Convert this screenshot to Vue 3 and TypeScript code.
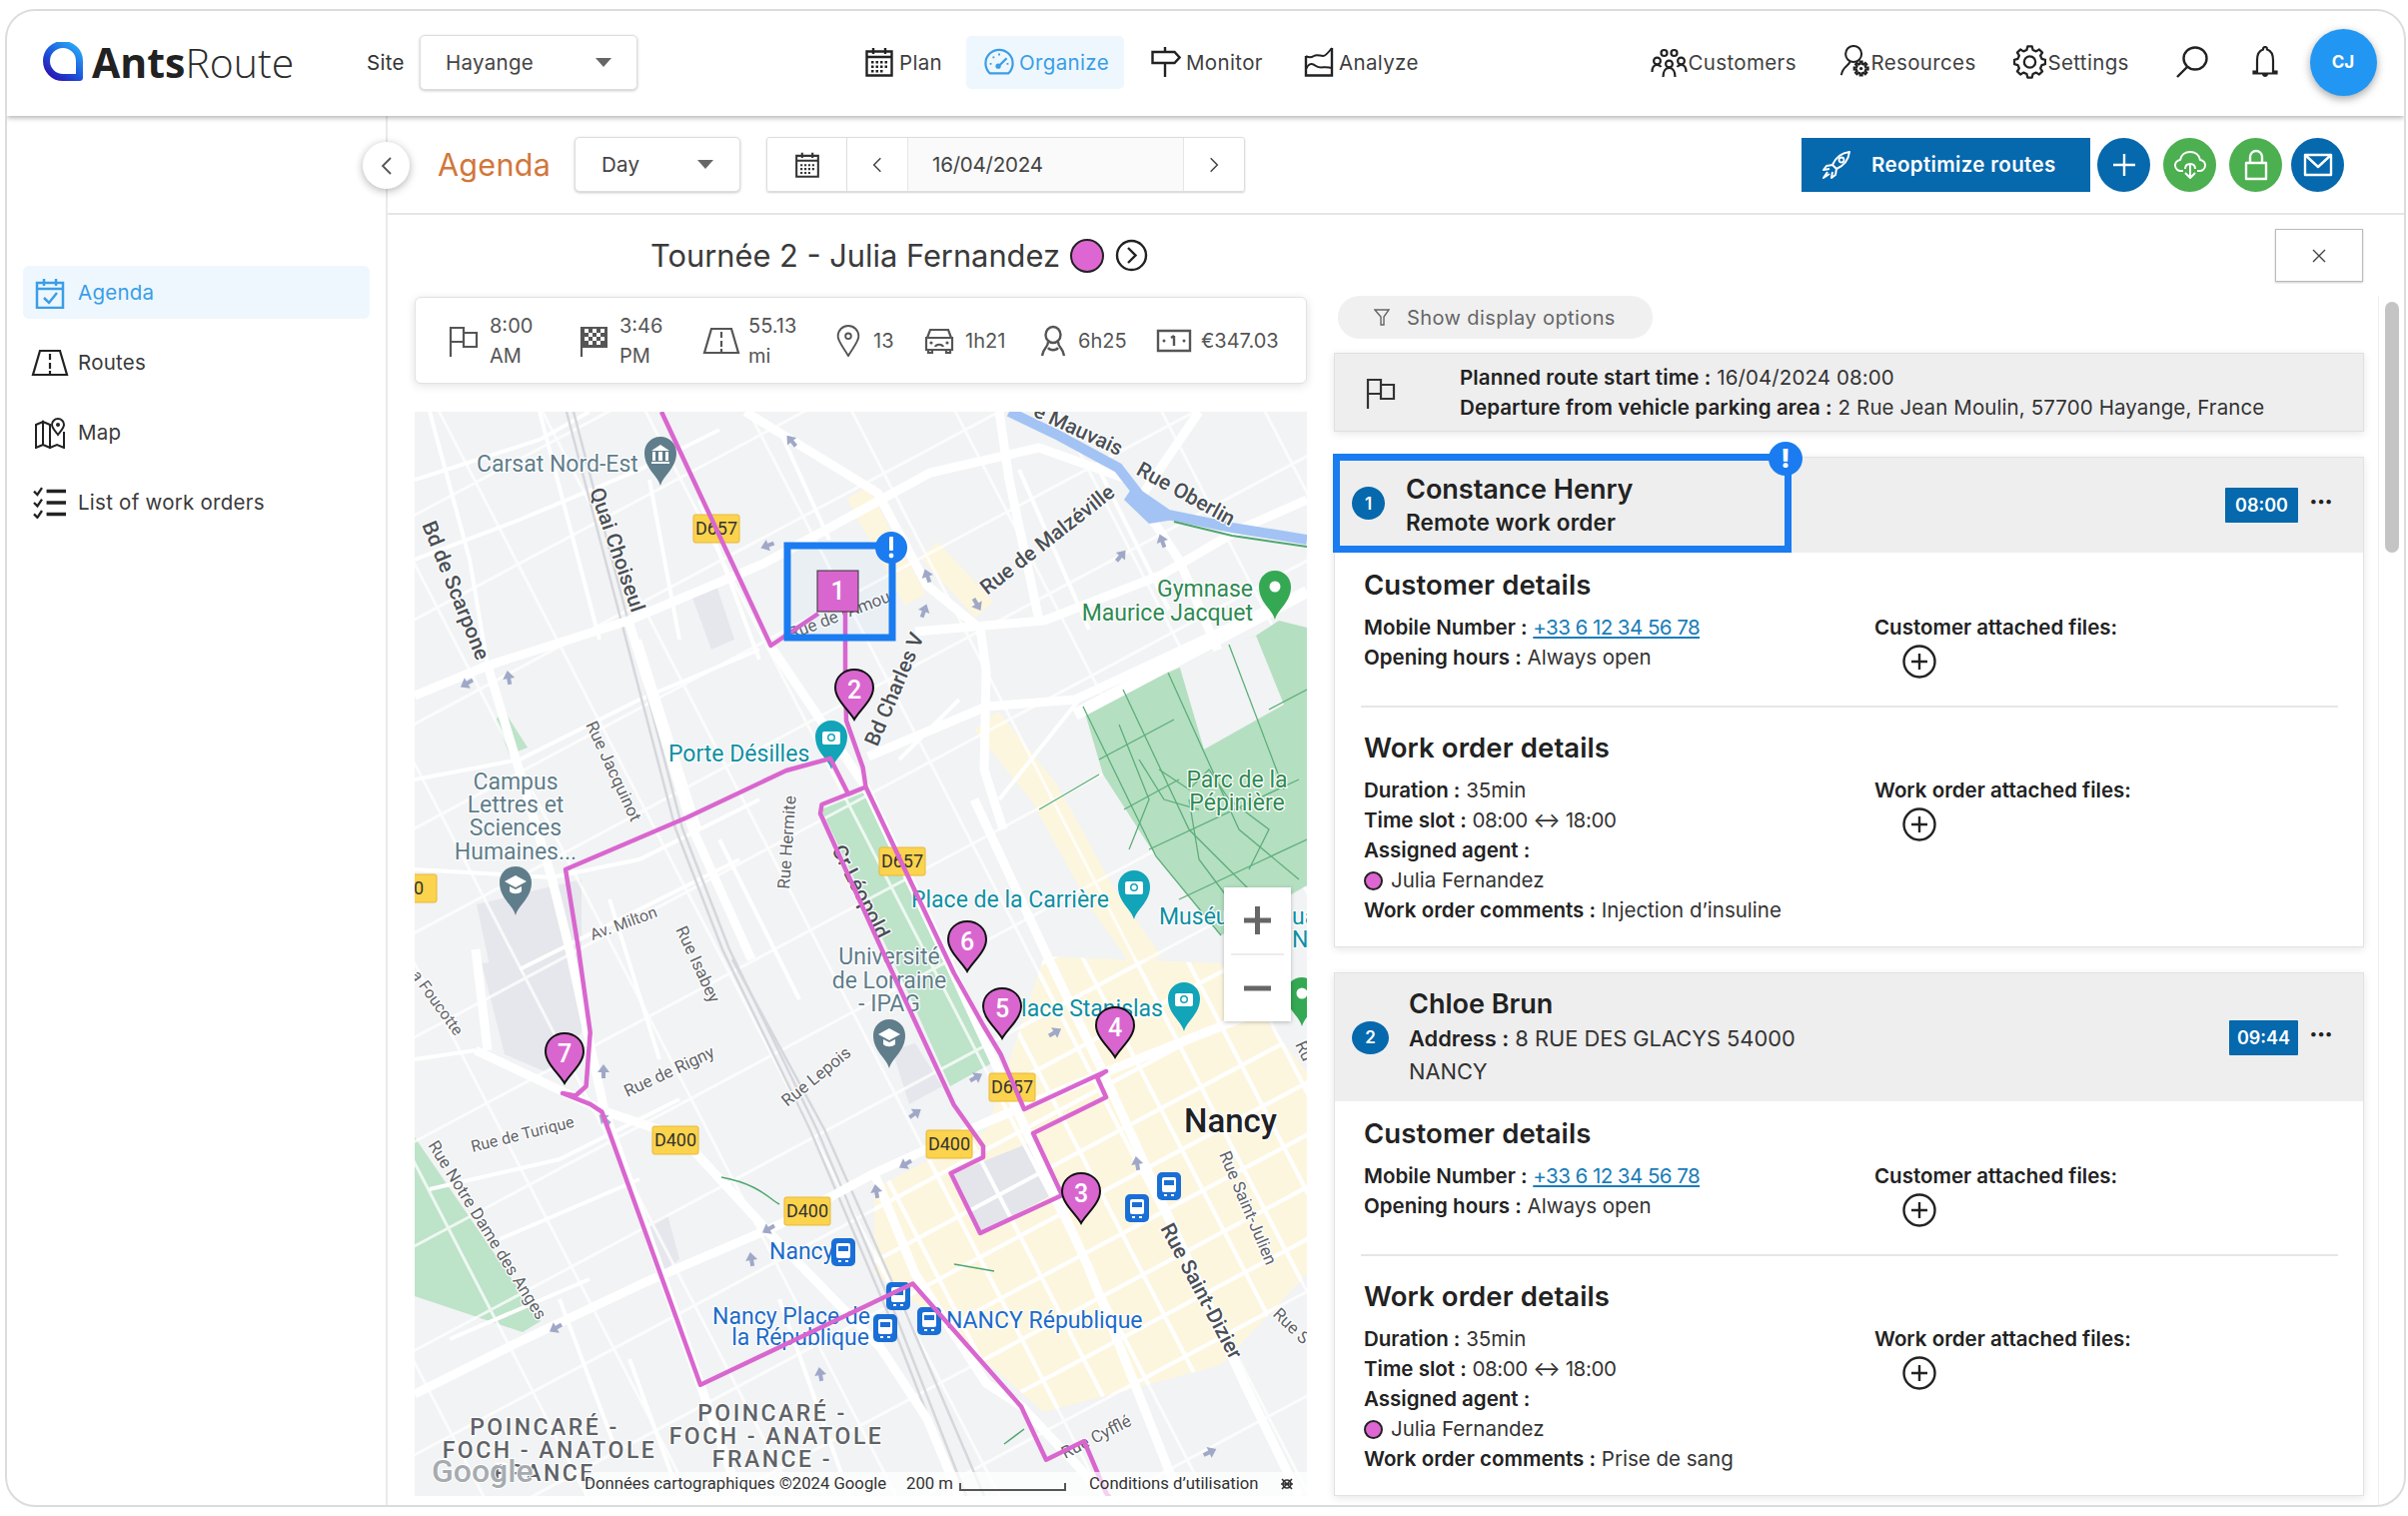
<script setup lang="ts">
interface Label { t: string; x: number; y: number; c: string; r?: number; a?: string }
interface Pin { n: number; x: number; y: number }
interface Poi { x: number; y: number; fill: string; kind: string }

const navCenter = [
  { label: 'Plan', icon: 'i-calendar', width: 102 },
  { label: 'Organize', icon: 'i-gauge', width: 185, active: true },
  { label: 'Monitor', icon: 'i-sign', width: 153 },
  { label: 'Analyze', icon: 'i-chart', width: 346.5 },
]
const navRight = [
  { label: 'Customers', icon: 'i-people', width: 189, iw: 38, gap: 0 },
  { label: 'Resources', icon: 'i-agent', width: 174, iw: 32, gap: 0 },
  { label: 'Settings', icon: 'i-gear', width: 162, iw: 33, gap: 2 },
]
const sideItems = [
  { label: 'Agenda', icon: 'i-agenda', active: true },
  { label: 'Routes', icon: 'i-road' },
  { label: 'Map', icon: 'i-map' },
  { label: 'List of work orders', icon: 'i-list' },
]
const stats = [
  { icon: 'i-flag', text: '8:00 AM', w: 131, tw: 50, iw: 30, gap: 11 },
  { icon: 'i-finish', text: '3:46 PM', w: 123, tw: 50, iw: 30, gap: 10 },
  { icon: 'i-road', text: '55.13 mi', w: 133, tw: 52, iw: 38, gap: 8 },
  { icon: 'i-pin', text: '13', w: 88, tw: 30, iw: 26, gap: 12 },
  { icon: 'i-car', text: '1h21', w: 116, tw: 50, iw: 32, gap: 10 },
  { icon: 'i-person', text: '6h25', w: 117, tw: 52, iw: 28, gap: 11 },
  { icon: 'i-money', text: '€347.03', w: 122, tw: 80, iw: 36, gap: 9 },
]
const stops = [
  { n: 1, name: 'Constance Henry', time: '08:00', comment: 'Injection d’insuline', remote: true },
  { n: 2, name: 'Chloe Brun', time: '09:44', comment: 'Prise de sang', remote: false },
]

// street network: two families of parallel lines, same slope as the real blocks
function grid(step: number, ox: number, oy: number): string {
  const a = [0.46, 0.89]
  const b = [0.88, -0.47]
  let d = ''
  for (let k = -16; k <= 16; k++) {
    const px = ox + b[0] * k * step
    const py = oy + b[1] * k * step
    d += `M${px - a[0] * 1500} ${py - a[1] * 1500}L${px + a[0] * 1500} ${py + a[1] * 1500}`
    const qx = ox + a[0] * k * step
    const qy = oy + a[1] * k * step
    d += `M${qx - b[0] * 1500} ${qy - b[1] * 1500}L${qx + b[0] * 1500} ${qy + b[1] * 1500}`
  }
  return d
}
const coarseStreets = grid(92, 1100, 1090)
const fineStreets = grid(46, 1100, 1090)

function gear(cx: number, cy: number, r1: number, r2: number, teeth: number): string {
  let d = ''
  const step = (Math.PI * 2) / teeth
  for (let i = 0; i < teeth; i++) {
    const t = i * step
    const pts: [number, number][] = [
      [r1, t - step * 0.32], [r2, t - step * 0.18], [r2, t + step * 0.18], [r1, t + step * 0.32],
    ]
    for (const [r, an] of pts) {
      d += `${d ? 'L' : 'M'}${(cx + r * Math.cos(an)).toFixed(2)} ${(cy + r * Math.sin(an)).toFixed(2)}`
    }
  }
  return d + 'Z'
}
const gearPath = gear(16, 16, 12, 15.2, 8)
const smallGear = gear(23, 25, 5, 7.5, 8)

const thickRoads = [
  '415,1395 517,1344 646,1283 781,1225 875,1174 987,1123 1116,1069 1308,993',
  '415,696 488,666 629,621 764,564 869,507 931,473 1040,448 1130,480',
  '916,632 1045,621 1163,575 1240,530 1308,500',
  '869,757 987,707 1076,700 1308,592',
  '746,412 878,493 928,586 981,629 987,671 985,770 1004,830',
  '771,646 866,787 954,973 1045,1170 1090,1270 1180,1497',
  '476,1051 605,1112 682,1138 775,1239 881,1348 928,1420 960,1497',
  '975,800 1045,950 1104,1073 1245,1384 1300,1497',
  '476,950 488,1051',
  '488,666 552,878 570,950 605,1112 701,1386 740,1497',
  '875,1174 916,1275 987,1384 1022,1407 1107,1497',
  '629,621 693,829 752,960',
  '1200,412 1140,500 1180,560 1240,700',
  '1000,412 1010,480 1040,621',
]
const thinRoads = [
  '415,480 540,440 590,412', '415,560 520,520 640,470 720,430', '430,412 470,560 488,666',
  '540,412 600,640', '700,500 760,660', '650,480 680,640', '780,430 830,540', '415,780 520,760 640,700 760,650',
  '415,870 552,878 640,860 760,800', '640,640 700,829', '720,840 800,1000', '610,900 660,1060', '520,970 620,920 740,860',
  '1100,470 1170,610', '1020,470 1090,630', '900,760 960,700', '1000,800 1080,700', '415,1060 476,1051',
  '430,1190 560,1160 680,1100', '500,1240 640,1180', '450,1340 590,1280', '560,1300 620,1460', '630,1360 680,1497',
  '780,1300 850,1497', '1150,760 1220,900',
]
const rails = ['567,412 676,829 723,950 811,1131 887,1310 960,1497', '574,412 683,829 730,950 818,1131 894,1310 967,1497', '733,960 825,1130 905,1310 985,1497']
const parkLines = [
  '1084,707 1157,857 1222,936', '1124,690 1190,830 1260,900', '1169,673 1240,830 1300,880', '1230,645 1285,790',
  '1100,760 1175,720', '1125,810 1180,780', '1150,850 1300,780', '1180,900 1308,840', '1120,725 1150,800 1130,850',
  '1160,770 1190,790 1210,770 1230,800', '1190,800 1200,860 1230,900', '1040,810 1100,775',
  '1230,800 1270,830 1250,870', '1140,760 1165,800 1200,810', '1270,710 1308,690',
]
const water = '1010,412 1060,436 1119,468 1140,495 1169,515 1233,528 1308,540'
const route = [
  '662,412 771.5,646 819,614',
  '846,611 846,671 847,721 863.6,768 866.5,787.5 822.5,805 821,814 887,960 954.6,1105.5 984,1147 984,1158 951.6,1174 981,1234 1063,1196 1034,1134 1107,1098 1098,1078 1107,1072 1025,1110 1001.5,1055 984,1026 954.6,973.5 866.5,787.5 849,794.6 831,759 787,771 687.6,818 566,870 579,950 590.7,1033 586.6,1087 576,1096.5 563,1094 590.7,1104.8 602.5,1112.7 701,1385.8 913.5,1284.5 1022,1407.5 1047,1460.7 1085,1442 1107,1494 1112,1500',
]
const arrows = [
  { x: 792, y: 441, r: -40 }, { x: 768, y: 546, r: -110 }, { x: 467, y: 684, r: -120 }, { x: 509, y: 678, r: -10 },
  { x: 928, y: 576, r: -20 }, { x: 978, y: 605, r: 150 }, { x: 925, y: 611, r: 20 }, { x: 1122, y: 556, r: 40 },
  { x: 1163, y: 541, r: -20 }, { x: 1056, y: 1033, r: 60 }, { x: 977, y: 1078, r: 60 }, { x: 916, y: 1114, r: 55 },
  { x: 906, y: 1165, r: -120 }, { x: 877, y: 1192, r: -10 }, { x: 769, y: 1230, r: -120 }, { x: 752, y: 1260, r: -10 },
  { x: 605, y: 1120, r: -50 }, { x: 604, y: 1072, r: 0 }, { x: 1138, y: 1164, r: -10 }, { x: 556, y: 1329, r: -120 },
  { x: 821, y: 1375, r: -10 }, { x: 1211, y: 1453, r: 65 },
]
const labels: Label[] = [
  { t: 'Carsat Nord-Est', x: 477, y: 472, c: 'gray' },
  { t: 'Quai Choiseul', x: 590, y: 491, c: 'md', r: 71 },
  { t: 'Bd de Scarpone', x: 422, y: 525, c: 'md', r: 68 },
  { t: 'Rue de Malzéville', x: 988, y: 596, c: 'md', r: -38 },
  { t: 'Rue Oberlin', x: 1136, y: 474, c: 'md', r: 29 },
  { t: 'e Mauvais', x: 1033, y: 416, c: 'md', r: 25 },
  { t: 'Gymnase', x: 1254, y: 597, c: 'green', a: 'end' },
  { t: 'Maurice Jacquet', x: 1254, y: 621, c: 'green', a: 'end' },
  { t: 'Rue de l’Amour', x: 792, y: 640, c: 'sm', r: -21 },
  { t: 'Bd Charles V', x: 878, y: 748, c: 'md', r: -67 },
  { t: 'Porte Désilles', x: 669, y: 762, c: 'teal' },
  { t: 'Campus', x: 516, y: 790, c: 'gray', a: 'middle' },
  { t: 'Lettres et', x: 516, y: 813, c: 'gray', a: 'middle' },
  { t: 'Sciences', x: 516, y: 836, c: 'gray', a: 'middle' },
  { t: 'Humaines...', x: 516, y: 860, c: 'gray', a: 'middle' },
  { t: 'Rue Jacquinot', x: 586, y: 725, c: 'sm', r: 65 },
  { t: 'Rue Hermite', x: 790, y: 890, c: 'sm', r: -86 },
  { t: 'Cr Léopold', x: 832, y: 850, c: 'md', r: 63 },
  { t: 'Parc de la', x: 1238, y: 788, c: 'green', a: 'middle' },
  { t: 'Pépinière', x: 1238, y: 811, c: 'green', a: 'middle' },
  { t: 'Place de la Carrière', x: 912, y: 908, c: 'teal' },
  { t: 'Muséu', x: 1160, y: 925, c: 'teal' },
  { t: 'ua', x: 1293, y: 925, c: 'teal' },
  { t: 'N', x: 1293, y: 948, c: 'teal' },
  { t: 'Av. Milton', x: 593, y: 941, c: 'xs', r: -20 },
  { t: 'Rue Isabey', x: 676, y: 930, c: 'sm', r: 65 },
  { t: 'Université', x: 890, y: 965, c: 'gray', a: 'middle' },
  { t: 'de Lorraine', x: 890, y: 989, c: 'gray', a: 'middle' },
  { t: '- IPAG', x: 890, y: 1012, c: 'gray', a: 'middle' },
  { t: 'Place Stanislas', x: 1164, y: 1017, c: 'teal', a: 'end' },
  { t: 'a Foucotte', x: 411, y: 976, c: 'xs', r: 54 },
  { t: 'Rue de Rigny', x: 628, y: 1098, c: 'sm', r: -25 },
  { t: 'Rue Lepois', x: 788, y: 1108, c: 'sm', r: -39 },
  { t: 'Rue de Turique', x: 473, y: 1153, c: 'xs', r: -14 },
  { t: 'Rue Notre Dame des Anges', x: 428, y: 1146, c: 'sm', r: 58 },
  { t: 'Nancy', x: 1185, y: 1133, c: 'city' },
  { t: 'Rue Saint-Julien', x: 1220, y: 1155, c: 'sm', r: 67 },
  { t: 'Rue Saint-Dizier', x: 1161, y: 1229, c: 'md', r: 62 },
  { t: 'Rue S', x: 1273, y: 1316, c: 'sm', r: 44 },
  { t: 'Ru', x: 1296, y: 1045, c: 'sm', r: 65 },
  { t: 'Rue Cyfflé', x: 1066, y: 1460, c: 'sm', r: -27 },
  { t: 'Nancy', x: 770, y: 1260, c: 'blue' },
  { t: 'Nancy Place de', x: 871, y: 1325, c: 'blue', a: 'end' },
  { t: 'la République', x: 870, y: 1346, c: 'blue', a: 'end' },
  { t: 'NANCY République', x: 947, y: 1329, c: 'blue' },
  { t: 'POINCARÉ -', x: 545, y: 1436, c: 'zone', a: 'middle' },
  { t: 'FOCH - ANATOLE', x: 550, y: 1459, c: 'zone', a: 'middle' },
  { t: 'FRANCE', x: 545, y: 1482, c: 'zone', a: 'middle' },
  { t: 'POINCARÉ -', x: 773, y: 1422, c: 'zone', a: 'middle' },
  { t: 'FOCH - ANATOLE', x: 777, y: 1445, c: 'zone', a: 'middle' },
  { t: 'FRANCE -', x: 773, y: 1468, c: 'zone', a: 'middle' },
]
const shields = [
  { t: 'D657', x: 717, y: 529 }, { t: 'D657', x: 903, y: 862 }, { t: 'D657', x: 1013, y: 1088 },
  { t: 'D400', x: 676, y: 1141 }, { t: 'D400', x: 950, y: 1145 }, { t: 'D400', x: 808, y: 1212 }, { t: '00', x: 414, y: 889 },
]
const pois: Poi[] = [
  { x: 661, y: 461, fill: '#607d8b', kind: 'museum' },
  { x: 832, y: 745, fill: '#12a4b8', kind: 'camera' },
  { x: 1135, y: 895, fill: '#12a4b8', kind: 'camera' },
  { x: 1185, y: 1007, fill: '#12a4b8', kind: 'camera' },
  { x: 516, y: 891, fill: '#607d8b', kind: 'school' },
  { x: 890, y: 1044, fill: '#607d8b', kind: 'school' },
  { x: 1276, y: 595, fill: '#34a853', kind: 'dot' },
  { x: 1303, y: 1002, fill: '#34a853', kind: 'dot' },
]
const transit = [
  { x: 1170, y: 1187 }, { x: 1138, y: 1209 }, { x: 899, y: 1297 }, { x: 886, y: 1329 }, { x: 930, y: 1322 }, { x: 844, y: 1253 },
]
const pins: Pin[] = [
  { n: 2, x: 855, y: 720 }, { n: 6, x: 968, y: 972 }, { n: 5, x: 1003, y: 1039 },
  { n: 4, x: 1116, y: 1058 }, { n: 3, x: 1082, y: 1224 }, { n: 7, x: 565, y: 1084 },
]
</script>

<template>
  <div class="page">
    <svg class="sprite" aria-hidden="true">
      <symbol id="i-calendar" viewBox="0 0 30 30">
        <path d="M2.500 4.500h25v24h-25zM2.500 10h25M9 1v6M21 1v6" fill="none" stroke="currentColor" stroke-width="2.400" />
        <path d="M7 14h2.500v2.500H7zM11.500 14H14v2.500h-2.500zM16 14h2.500v2.500H16zM20.500 14H23v2.500h-2.500zM7 18.500h2.500V21H7zM11.500 18.500H14V21h-2.500zM16 18.500h2.500V21H16zM20.500 18.500H23V21h-2.500zM7 23h2.500v2.500H7zM11.500 23H14v2.500h-2.500zM16 23h2.500v2.500H16z" fill="currentColor" />
      </symbol>
      <symbol id="i-gauge" viewBox="0 0 32 32">
        <path d="M6 28C3 25 1.500 21 1.500 17.500a14.500 14.500 0 0 1 29 0C30.500 21 29 25 26 28z" fill="none" stroke="currentColor" stroke-width="2.400" />
        <path d="M16 20l8-8" fill="none" stroke="currentColor" stroke-width="2.400" />
        <path d="M6 17h2v2H6zM9 10h2v2H9zM15 7h2v2h-2zM24 17h2v2h-2z" fill="currentColor" />
        <circle cx="15" cy="20.500" r="2.800" fill="currentColor" />
      </symbol>
      <symbol id="i-sign" viewBox="0 0 30 30">
        <path d="M1.500 5h22l5 5.500-5 5.500h-22zM14 0v5M14 16v14" fill="none" stroke="currentColor" stroke-width="2.400" />
      </symbol>
      <symbol id="i-chart" viewBox="0 0 30 30">
        <path d="M2 9v19.500h26V1" fill="none" stroke="currentColor" stroke-width="2.400" />
        <path d="M2 9c3 2 5 2 8 0s6 0 9 0 6-4 9-8M2 22c3-6 6-6 10-3s8 0 16 2" fill="none" stroke="currentColor" stroke-width="2" />
      </symbol>
      <symbol id="i-people" viewBox="0 0 38 30">
        <g fill="none" stroke="currentColor" stroke-width="2.200">
          <circle cx="13.500" cy="6" r="3" /><circle cx="23.500" cy="6" r="3" />
          <circle cx="6.500" cy="14" r="3.400" /><circle cx="18.500" cy="17" r="3.400" /><circle cx="30.500" cy="14" r="3.400" />
          <path d="M1.500 25c0-5 2-7 5-7 1.500 0 3 .5 4 2M35.500 25c0-5-2-7-5-7-1.500 0-3 .5-4 2M12.500 30c0-5 2-9 6-9s6 4 6 9" />
        </g>
      </symbol>
      <symbol id="i-agent" viewBox="0 0 34 36">
        <g fill="none" stroke="currentColor" stroke-width="2.200">
          <ellipse cx="15" cy="9.500" rx="8.500" ry="8.500" />
          <path d="M11 18c-1 4-8 5-9 14" />
        </g>
        <path :d="smallGear" fill="none" stroke="currentColor" stroke-width="2.200" />
        <circle cx="23" cy="25" r="1.800" fill="currentColor" />
      </symbol>
      <symbol id="i-gear" viewBox="0 0 32 32">
        <path :d="gearPath" fill="none" stroke="currentColor" stroke-width="2.200" stroke-linejoin="round" />
        <circle cx="16" cy="16" r="5.500" fill="none" stroke="currentColor" stroke-width="2.200" />
      </symbol>
      <symbol id="i-agenda" viewBox="0 0 30 32">
        <path d="M2 6h26v25H2zM2 12h26M9 2v7M21 2v7" fill="none" stroke="currentColor" stroke-width="2.500" />
        <path d="M9 21l5 5 8-10" fill="none" stroke="currentColor" stroke-width="2.500" />
      </symbol>
      <symbol id="i-road" viewBox="0 0 38 28">
        <path d="M9 2h20l7 24H2z" fill="none" stroke="currentColor" stroke-width="2.200" />
        <path d="M19 5v6M19 14v6M19 22v3" fill="none" stroke="currentColor" stroke-width="2.200" />
      </symbol>
      <symbol id="i-map" viewBox="0 0 32 32">
        <path d="M2 8l7-3v23l-7 3zM9 5l7 3v23l-7-3zM16 15v16l7-3 7 3V15" fill="none" stroke="currentColor" stroke-width="2" />
        <path d="M24 18c-3-4-6-7-6-10a6 6 0 0 1 12 0c0 3-3 6-6 10z" fill="#fff" stroke="currentColor" stroke-width="2" />
        <circle cx="24" cy="8" r="2" fill="currentColor" />
      </symbol>
      <symbol id="i-list" viewBox="0 0 30 28">
        <path d="M1 4l3 3 4-6M1 14l3 3 4-6M1 24l3 3 4-6" fill="none" stroke="currentColor" stroke-width="2" />
        <path d="M12 4h17M12 14h17M12 24h17" fill="none" stroke="currentColor" stroke-width="3" />
      </symbol>
      <symbol id="i-flag" viewBox="0 0 30 32">
        <path d="M2 32V3h13v5h13v14H15v-5H2M15 3v14" fill="none" stroke="currentColor" stroke-width="2.200" />
      </symbol>
      <symbol id="i-finish" viewBox="0 0 30 32">
        <path d="M2 32V2" fill="none" stroke="currentColor" stroke-width="2.200" />
        <path d="M3 2h25v21H3z" fill="#555" />
        <path d="M5 4h4v4H5zM13 4h4v4h-4zM21 4h4v4h-4zM9 8h4v4H9zM17 8h4v4h-4zM5 12h4v4H5zM13 12h4v4h-4zM21 12h4v4h-4zM9 16h4v4H9zM17 16h4v4h-4z" fill="#fff" />
      </symbol>
      <symbol id="i-pin" viewBox="0 0 26 34">
        <path d="M13 33C8 24 2 18 2 12a11 11 0 0 1 22 0c0 6-6 12-11 21z" fill="none" stroke="currentColor" stroke-width="2" />
        <circle cx="13" cy="12" r="3" fill="none" stroke="currentColor" stroke-width="2" />
      </symbol>
      <symbol id="i-car" viewBox="0 0 32 28">
        <path d="M7 3h18l3 8H4zM3 11h26v12H3zM5 23v3h4v-3M23 23v3h4v-3M12 20c1-3 7-3 8 0" fill="none" stroke="currentColor" stroke-width="2.200" />
        <circle cx="8" cy="16" r="1.600" fill="currentColor" /><circle cx="24" cy="16" r="1.600" fill="currentColor" />
      </symbol>
      <symbol id="i-person" viewBox="0 0 28 32">
        <ellipse cx="14" cy="10" rx="7.500" ry="8" fill="none" stroke="currentColor" stroke-width="2.400" />
        <path d="M9 17c0 6-5 6-6 14M19 17c0 6 5 6 6 14M9 23c2 3 8 3 10 0" fill="none" stroke="currentColor" stroke-width="2.400" />
      </symbol>
      <symbol id="i-money" viewBox="0 0 36 26">
        <path d="M2 3h32v20H2zM18 8v10M15 10l3-2" fill="none" stroke="currentColor" stroke-width="2.400" />
        <circle cx="8" cy="13" r="1.500" fill="currentColor" /><circle cx="28" cy="13" r="1.500" fill="currentColor" />
      </symbol>
      <symbol id="i-plus" viewBox="0 0 34 34">
        <circle cx="17" cy="17" r="15.500" fill="none" stroke="currentColor" stroke-width="2.400" />
        <path d="M17 9v16M9 17h16" fill="none" stroke="currentColor" stroke-width="2.400" />
      </symbol>
      <symbol id="i-chevron-right" viewBox="0 0 12 20">
        <path d="M2 2l8 8-8 8" fill="none" stroke="currentColor" stroke-width="1.800" />
      </symbol>
      <symbol id="i-chevron-left" viewBox="0 0 12 20">
        <path d="M10 2l-8 8 8 8" fill="none" stroke="currentColor" stroke-width="1.800" />
      </symbol>
    </svg>

    <div class="window">
      <header class="topbar">
        <div class="logo">
          <svg width="42" height="40" viewBox="0 0 42 40">
            <defs>
              <linearGradient id="logoGrad" x1=".9" y1="0" x2=".1" y2="1">
                <stop offset="0" stop-color="#2aa8f6" />
                <stop offset=".55" stop-color="#1c55dc" />
                <stop offset="1" stop-color="#2a12b0" />
              </linearGradient>
            </defs>
            <path d="M37.500 35.500H21A16.500 16.500 0 1 1 37.500 19z" fill="none" stroke="url(#logoGrad)" stroke-width="7" stroke-linejoin="round" />
          </svg>
          <span class="wordmark"><b>Ants</b>Route</span>
        </div>
        <span class="site-label">Site</span>
        <div class="select site-select">Hayange<i class="caret" /></div>

        <nav class="nav nav-center">
          <a v-for="item in navCenter" :key="item.label" class="nav-slot" :style="{ width: item.width + 'px' }">
            <span class="nav-item" :class="{ active: item.active }">
              <svg class="nav-icon"><use :href="'#' + item.icon" /></svg>{{ item.label }}
            </span>
          </a>
        </nav>

        <nav class="nav nav-right">
          <a v-for="item in navRight" :key="item.label" class="nav-slot" :style="{ width: item.width + 'px' }">
            <span class="nav-item plain" :style="{ gap: item.gap + 'px' }">
              <svg class="nav-icon" :style="{ width: item.iw + 'px' }"><use :href="'#' + item.icon" /></svg>{{ item.label }}
            </span>
          </a>
          <svg class="search" width="34" height="32" viewBox="0 0 34 32">
            <ellipse cx="20" cy="12.500" rx="11.500" ry="11" fill="none" stroke="#222" stroke-width="2.400" />
            <path d="M12 21L2 31" stroke="#222" stroke-width="2.400" />
          </svg>
          <svg class="bell" width="26" height="32" viewBox="0 0 26 32">
            <path d="M13 1c1.500 0 2 1 2 2.500 5 1.500 6 6 6 11v11h3.500v2h-23v-2H5v-11c0-5 1-9.500 6-11C11 2 11.500 1 13 1z" fill="none" stroke="#222" stroke-width="2.200" />
            <path d="M10 28h6c0 4-6 4-6 0z" fill="#222" />
          </svg>
          <span class="avatar">CJ</span>
        </nav>
      </header>

      <div class="body">
        <aside class="sidebar">
          <button class="collapse"><svg width="12" height="22"><use href="#i-chevron-left" /></svg></button>
          <a v-for="item in sideItems" :key="item.label" class="side-item" :class="{ active: item.active }">
            <span class="side-icon"><svg width="38" height="32"><use :href="'#' + item.icon" /></svg></span>
            {{ item.label }}
          </a>
        </aside>

        <main class="main">
          <div class="subbar">
            <h1 class="agenda-title">Agenda</h1>
            <div class="select day-select">Day<i class="caret" /></div>
            <div class="date-group">
              <span class="date-cal"><svg width="26" height="28"><use href="#i-calendar" /></svg></span>
              <span class="date-arrow"><svg width="10" height="18"><use href="#i-chevron-left" /></svg></span>
              <span class="date-value">16/04/2024</span>
              <span class="date-arrow"><svg width="10" height="18"><use href="#i-chevron-right" /></svg></span>
            </div>
            <div class="actions">
              <button class="reoptimize">
                <svg width="30" height="30" viewBox="0 0 30 30">
                  <path d="M28 2c-8 1-14 6-17 13l4 4c7-3 12-9 13-17zM11 15l-6 1-3 4 6-1M15 19l-1 6-4 3 1-6M6 22l-4 6 6-4" fill="none" stroke="#fff" stroke-width="2" stroke-linejoin="round" />
                  <circle cx="20" cy="10" r="2.500" fill="none" stroke="#fff" stroke-width="1.800" />
                </svg>
                Reoptimize routes
              </button>
              <button class="round blue">
                <svg width="28" height="28" viewBox="0 0 28 28"><path d="M14 3v22M3 14h22" stroke="#fff" stroke-width="2.400" /></svg>
              </button>
              <button class="round green">
                <svg width="32" height="30" viewBox="0 0 32 30"><path d="M9 21H7a5.500 5.500 0 0 1-1-11c1-5 5-8 10-8s9 3 10 8a5.500 5.500 0 0 1-1 11h-2M16 14v14M11 23l5 5 5-5M11 19c0-3 2-5 5-5s5 2 5 5" fill="none" stroke="#fff" stroke-width="2" /></svg>
              </button>
              <button class="round green">
                <svg width="26" height="32" viewBox="0 0 26 32"><path d="M3 14h20v16H3zM7 14V8a6 6 0 0 1 12 0v6" fill="none" stroke="#fff" stroke-width="2.400" /></svg>
              </button>
              <button class="round blue last">
                <svg width="30" height="26" viewBox="0 0 30 26"><path d="M2 3h26v20H2zM2 3l13 12L28 3" fill="none" stroke="#fff" stroke-width="2.400" /></svg>
              </button>
            </div>
          </div>

          <div class="content">
            <div class="title-row">
              <h2 class="route-title">Tournée 2 - Julia Fernandez</h2>
              <i class="agent-dot big" />
              <svg class="next" width="33" height="33" viewBox="0 0 33 33">
                <circle cx="16.500" cy="16.500" r="14.500" fill="none" stroke="#222" stroke-width="2.400" />
                <path d="M13 9l7.500 7.500L13 24" fill="none" stroke="#222" stroke-width="2.400" />
              </svg>
              <button class="close">
                <svg width="14" height="14" viewBox="0 0 14 14"><path d="M1 1l12 12M13 1L1 13" stroke="#444" stroke-width="1.400" /></svg>
              </button>
            </div>

            <div class="columns">
              <section class="left">
                <div class="stats">
                  <div v-for="s in stats" :key="s.icon" class="stat" :style="{ width: s.w + 'px', gap: s.gap + 'px' }">
                    <svg class="stat-icon" :width="s.iw" height="32"><use :href="'#' + s.icon" /></svg>
                    <span class="stat-text" :style="{ width: s.tw + 'px' }">{{ s.text }}</span>
                  </div>
                </div>

                <div class="map">
                  <svg width="893" height="1085" viewBox="415 412 893 1085">
                    <defs>
                      <clipPath id="yellowZone">
                        <path d="M875 1189L987 1131 1010 1062 1045 957 1222 964 1308 1073V1275L1222 1366 1045 1413 928 1312 875 1275Z" />
                      </clipPath>
                    </defs>
                    <rect x="415" y="412" width="893" height="1085" fill="#f1f3f4" />
                    <!-- landuse -->
                    <path d="M875 1189L987 1131 1010 1062 1045 957 1222 964 1308 1073V1275L1222 1366 1045 1413 928 1312 875 1275Z" fill="#fdf6df" />
                    <path d="M987 721L1045 793 1104 900 1150 965" fill="none" stroke="#fdf6df" stroke-width="30" />
                    <path d="M858 493L916 600M930 550L985 610" fill="none" stroke="#fdf6df" stroke-width="24" />
                    <path d="M822 810L870 791 969 997 996 1062 951 1087 905 985Z" fill="#bde3c9" />
                    <path d="M415 1138L541 1322 523 1333 415 1297Z" fill="#bde3c9" />
                    <path d="M496 720L505 712 528 748 510 755Z" fill="#bde3c9" />
                    <path d="M954.600 1174L1034 1142 1060 1192 981 1234Z" fill="#e3e5ea" />
                    <path d="M482 964L582 950V1033L547 1073 505 1055Z" fill="#e6e7ec" />
                    <path d="M477 905L582 880V950L490 966Z" fill="#e6e7ec" />
                    <path d="M893 1051L916 1044 943 1087 910 1105Z" fill="#e6e7ec" />
                    <path d="M690 590L715 580 735 640 712 650ZM640 1230L668 1215 680 1260 660 1275Z" fill="#e6e7ec" />
                    <!-- streets -->
                    <path :d="coarseStreets" fill="none" stroke="#fff" stroke-width="3" opacity=".75" />
                    <path :d="fineStreets" fill="none" stroke="#fff" stroke-width="4" clip-path="url(#yellowZone)" />
                    <polyline v-for="(r, i) in thinRoads" :key="'thin' + i" :points="r" fill="none" stroke="#fff" stroke-width="4" />
                    <polyline v-for="(r, i) in rails" :key="'rail' + i" :points="r" fill="none" stroke="#d5d7dc" stroke-width="2.500" />
                    <polyline v-for="(r, i) in thickRoads" :key="'road' + i" :points="r" fill="none" stroke="#fff" stroke-width="9" stroke-linejoin="round" />
                    <!-- park sits on top of the street grid -->
                    <path d="M1084 707L1169 673 1257 636 1280 621 1308 628V886L1222 936 1157 857 1104 775Z" fill="#b5dfc1" />
                    <path d="M1180 665L1257 636 1285 705 1205 750Z" fill="#f1f3f4" />
                    <polyline points="1076,715 1308,592" fill="none" stroke="#fff" stroke-width="12" />
                    <!-- water and park paths -->
                    <polyline :points="water" fill="none" stroke="#a3c3f4" stroke-width="10" />
                    <path d="M1135 485L1175 520 1150 524 1125 500Z" fill="#a3c3f4" />
                    <path d="M1175 522L1233 536 1308 547" fill="none" stroke="#4fa66f" stroke-width="2" />
                    <polyline v-for="(r, i) in parkLines" :key="'park' + i" :points="r" fill="none" stroke="#5cae7a" stroke-width="1.300" />
                    <path d="M722 1178C760 1185 770 1200 780 1205M955 1265L995 1272M1005 1445L1025 1430" fill="none" stroke="#4fa66f" stroke-width="1.500" />
                    <path v-for="(a, i) in arrows" :key="'arrow' + i" d="M0 -7L6 1H2V7H-2V1H-6Z" fill="#a0a8c8" :transform="`translate(${a.x} ${a.y}) rotate(${a.r})`" />
                    <!-- labels -->
                    <text v-for="(l, i) in labels" :key="'label' + i" :x="l.x" :y="l.y" :class="l.c" :text-anchor="l.a" :transform="l.r ? `rotate(${l.r} ${l.x} ${l.y})` : undefined">{{ l.t }}</text>
                    <g v-for="(s, i) in shields" :key="'shield' + i" :transform="`translate(${s.x} ${s.y})`">
                      <rect x="-23" y="-14" width="46" height="28" rx="2" fill="#fcd34d" stroke="#e5b93a" />
                      <text class="shield" y="6" text-anchor="middle">{{ s.t }}</text>
                    </g>
                    <g v-for="(p, i) in pois" :key="'poi' + i" :transform="`translate(${p.x} ${p.y})`">
                      <path d="M0 25C-3 14-16 8-16-8C-16-17-9-24 0-24S16-17 16-8C16 8 3 14 0 25Z" :fill="p.fill" />
                      <g v-if="p.kind === 'camera'" fill="#fff">
                        <rect x="-9" y="-13" width="18" height="13" rx="2" /><circle cy="-7" r="4" :fill="p.fill" /><circle cy="-7" r="2.500" />
                      </g>
                      <path v-else-if="p.kind === 'museum'" d="M-9-10L0-16 9-10ZM-8-9H-5V0H-8ZM-2-9H2V0H-2ZM5-9H8V0H5ZM-9 1H9V3H-9Z" fill="#fff" />
                      <path v-else-if="p.kind === 'school'" d="M0-15L11-9 0-3-11-9ZM-6-4L0-1 6-4V1C3 4-3 4-6 1Z" fill="#fff" />
                      <circle v-else cy="-8" r="5.500" fill="#fff" />
                    </g>
                    <g v-for="(t, i) in transit" :key="'bus' + i" :transform="`translate(${t.x} ${t.y})`">
                      <rect x="-12" y="-14" width="24" height="28" rx="5" fill="#1a6fd6" />
                      <rect x="-7" y="-9" width="14" height="15" rx="2" fill="#fff" />
                      <rect x="-5" y="-6" width="10" height="5" fill="#1a6fd6" />
                      <path d="M-5 8H-2V10H-5ZM2 8H5V10H2Z" fill="#fff" />
                    </g>
                    <!-- route -->
                    <polyline v-for="(r, i) in route" :key="'route' + i" :points="r" fill="none" stroke="#d966cf" stroke-width="4.500" stroke-linejoin="round" />
                    <g v-for="p in pins" :key="p.n" :transform="`translate(${p.x} ${p.y})`">
                      <path d="M0 0C-6-10-19-20-19-32C-19-43-10-50 0-50S19-43 19-32C19-20 6-10 0 0Z" fill="#d966cf" stroke="#111" stroke-width="2" />
                      <text class="pin-num" y="-21" text-anchor="middle">{{ p.n }}</text>
                    </g>
                    <!-- first stop, selected -->
                    <rect x="788" y="546" width="105" height="92" fill="#1a7cf0" fill-opacity=".03" stroke="#1a7cf0" stroke-width="7" />
                    <rect x="818" y="571" width="41" height="41" fill="#d966cf" stroke="#333" />
                    <text class="pin-num" x="838.500" y="600" text-anchor="middle">1</text>
                    <circle cx="892" cy="548" r="16" fill="#1a7cf0" />
                    <rect x="890" y="537" width="4" height="14" rx="1" fill="#fff" />
                    <circle cx="892" cy="556" r="2.400" fill="#fff" />
                    <!-- google chrome -->
                    <text class="google" x="432" y="1483">Google</text>
                    <rect x="585" y="1473" width="723" height="24" fill="#fff" fill-opacity=".7" />
                    <text class="attr" x="585" y="1490">Données cartographiques ©2024 Google</text>
                    <text class="attr" x="907" y="1490">200 m</text>
                    <path d="M961 1484V1491H1066V1484" fill="none" stroke="#555" stroke-width="2" />
                    <text class="attr" x="1090" y="1490">Conditions d’utilisation</text>
                    <g transform="translate(1288 1485)" fill="none" stroke="#333" stroke-width="1.600">
                      <circle r="4" /><path d="M-6 0H6M-5-5L5 5M5-5L-5 5" />
                    </g>
                    <!-- zoom control -->
                    <g>
                      <rect x="1225" y="888" width="67" height="134" fill="#fff" filter="drop-shadow(0 1px 2px rgba(0,0,0,.25))" />
                      <path d="M1245 921H1272M1258.500 907V935" stroke="#666" stroke-width="5" />
                      <path d="M1232 955H1285" stroke="#e6e6e6" stroke-width="1.500" />
                      <path d="M1245 989H1272" stroke="#666" stroke-width="5" />
                    </g>
                  </svg>
                </div>
              </section>

              <section class="right">
                <button class="display-options">
                  <svg width="16" height="18" viewBox="0 0 16 18"><path d="M1 1h14l-5 7v8H7V8z" fill="none" stroke="#666" stroke-width="1.400" /></svg>
                  Show display options
                </button>

                <div class="start-card">
                  <svg class="start-flag" width="30" height="32"><use href="#i-flag" /></svg>
                  <div>
                    <p><b>Planned route start time :</b> 16/04/2024 08:00</p>
                    <p><b>Departure from vehicle parking area :</b> 2 Rue Jean Moulin, 57700 Hayange, France</p>
                  </div>
                </div>

                <article v-for="stop in stops" :key="stop.n" class="stop">
                  <header class="stop-head" :class="{ tall: !stop.remote }">
                    <div class="stop-who" :class="{ flagged: stop.remote }">
                      <span class="stop-num" :class="{ wide: !stop.remote }">{{ stop.n }}</span>
                      <div class="stop-text">
                        <h3>{{ stop.name }}</h3>
                        <p v-if="stop.remote" class="remote">Remote work order</p>
                        <p v-else class="address"><b>Address :</b> 8 RUE DES GLACYS 54000 NANCY</p>
                      </div>
                      <span v-if="stop.remote" class="alert">!</span>
                    </div>
                    <span class="stop-time" :class="{ narrow: !stop.remote }">{{ stop.time }}</span>
                    <span class="stop-more">···</span>
                  </header>

                  <div class="stop-section first">
                    <div class="col">
                      <h4>Customer details</h4>
                      <p><b>Mobile Number :</b> <a class="tel">+33 6 12 34 56 78</a></p>
                      <p><b>Opening hours :</b> Always open</p>
                    </div>
                    <div class="col files">
                      <p><b>Customer attached files:</b></p>
                      <svg class="add" width="34" height="34"><use href="#i-plus" /></svg>
                    </div>
                  </div>
                  <hr />
                  <div class="stop-section">
                    <div class="col">
                      <h4>Work order details</h4>
                      <p><b>Duration :</b> 35min</p>
                      <p><b>Time slot :</b> <span class="slot">08:00 ↔ 18:00</span></p>
                      <p><b>Assigned agent :</b></p>
                      <p class="agent"><i class="agent-dot" />Julia Fernandez</p>
                      <p><b>Work order comments :</b> {{ stop.comment }}</p>
                    </div>
                    <div class="col files">
                      <p><b>Work order attached files:</b></p>
                      <svg class="add" width="34" height="34"><use href="#i-plus" /></svg>
                    </div>
                  </div>
                </article>
              </section>

              <div class="scroll-track"><span class="scroll-thumb" /></div>
            </div>
          </div>
        </main>
      </div>
    </div>
  </div>
</template>

<style scoped>
.page {
  box-sizing: border-box;
  width: 2410px;
  height: 1517px;
  padding: 9px 2px 9px 5px;
  background: #fff;
  font-family: Inter, "Liberation Sans", sans-serif;
  font-size: 20.5px;
  color: #333;
}
.sprite {
  position: absolute;
  width: 0;
  height: 0;
}
.window {
  box-sizing: border-box;
  height: 100%;
  border: 2px solid #dcdcdc;
  border-radius: 30px;
  overflow: hidden;
  display: flex;
  flex-direction: column;
  background: #fff;
}
h1, h2, h3, h4, p {
  margin: 0;
  font-weight: 400;
}
button {
  font-family: inherit;
  border: none;
  padding: 0;
}

/* top bar */
.topbar {
  flex: none;
  box-sizing: border-box;
  height: 105px;
  display: flex;
  align-items: center;
  padding: 0 0 3px 35px;
  position: relative;
  z-index: 3;
  box-shadow: 0 2px 5px rgba(0, 0, 0, .3);
  background: #fff;
}
.logo {
  width: 325px;
  display: flex;
  align-items: center;
  gap: 8px;
  flex: none;
}
.wordmark {
  font-family: "Open Sans", sans-serif;
  font-size: 41px;
  font-weight: 300;
  color: #2c2c2c;
  line-height: 1;
}
.wordmark b {
  font-weight: 700;
}
.site-label {
  width: 53px;
  flex: none;
  letter-spacing: .3px;
}
.select {
  box-sizing: border-box;
  height: 55px;
  display: flex;
  align-items: center;
  justify-content: space-between;
  background: #fff;
  border: 1px solid #ddd;
  border-radius: 5px;
  box-shadow: 0 1px 3px rgba(0, 0, 0, .22);
  letter-spacing: .3px;
  color: #444;
}
.site-select {
  width: 218px;
  padding: 0 25px;
  flex: none;
}
.caret {
  width: 0;
  height: 0;
  border-left: 8.500px solid transparent;
  border-right: 8.500px solid transparent;
  border-top: 9px solid #666;
}
.nav {
  display: flex;
  align-items: center;
  flex: none;
}
.nav-center {
  margin-left: 227px;
}
.nav-slot {
  flex: none;
  display: flex;
}
.nav-item {
  display: inline-flex;
  align-items: center;
  gap: 5px;
  height: 53px;
  letter-spacing: .35px;
  color: #3f3f3f;
}
.nav-item.active {
  box-sizing: border-box;
  width: 158px;
  padding-left: 18px;
  background: #eef7fe;
  border-radius: 5px;
  color: #3a9ee6;
}
.nav-icon {
  width: 30px;
  height: 30px;
  color: #222;
  flex: none;
}
.nav-item.active .nav-icon {
  color: #3a9ee6;
}
.nav-item.plain .nav-icon {
  height: 34px;
}
.search {
  margin-right: 43px;
  flex: none;
}
.bell {
  margin-right: 32px;
  flex: none;
}
.avatar {
  width: 67px;
  height: 67px;
  flex: none;
  border-radius: 50%;
  background: #2196f3;
  color: #fff;
  font-size: 17px;
  font-weight: 700;
  display: flex;
  align-items: center;
  justify-content: center;
  box-shadow: 0 3px 8px rgba(0, 0, 0, .35);
}

/* layout */
.body {
  flex: 1;
  min-height: 0;
  display: flex;
}
.sidebar {
  flex: none;
  box-sizing: border-box;
  width: 381px;
  padding: 150px 16px 0 16px;
  border-right: 2px solid #eaeaea;
  position: relative;
  display: flex;
  flex-direction: column;
  gap: 17px;
}
.collapse {
  position: absolute;
  top: 26px;
  right: -24px;
  width: 47px;
  height: 47px;
  border-radius: 50%;
  background: #fff;
  color: #555;
  z-index: 2;
  display: flex;
  align-items: center;
  justify-content: center;
  box-shadow: 0 2px 8px rgba(0, 0, 0, .3);
}
.side-item {
  height: 53px;
  display: flex;
  align-items: center;
  gap: 9px;
  padding-left: 8px;
  border-radius: 6px;
  letter-spacing: .25px;
  color: #3a3a3a;
}
.side-item.active {
  background: #eef7fe;
  color: #3a9ee6;
}
.side-icon {
  width: 38px;
  display: flex;
  justify-content: center;
  color: #222;
}
.side-item.active .side-icon {
  color: #3a9ee6;
}
.main {
  flex: 1;
  min-width: 0;
  display: flex;
  flex-direction: column;
}
.subbar {
  flex: none;
  box-sizing: border-box;
  height: 99px;
  display: flex;
  align-items: center;
  padding-left: 50px;
  border-bottom: 2px solid #e6e6e6;
}
.agenda-title {
  width: 137px;
  flex: none;
  font-size: 30.500px;
  letter-spacing: .3px;
  color: #d2763a;
}
.day-select {
  width: 166px;
  padding: 0 26px;
  flex: none;
}
.date-group {
  margin-left: 26px;
  width: 479px;
  height: 55px;
  flex: none;
  display: flex;
  border: 1px solid #ddd;
  border-radius: 3px;
  box-sizing: border-box;
  box-shadow: 0 1px 2px rgba(0, 0, 0, .18);
}
.date-cal {
  width: 79px;
  display: flex;
  align-items: center;
  justify-content: center;
  border-right: 1px solid #ddd;
  color: #333;
}
.date-arrow {
  width: 60px;
  display: flex;
  align-items: center;
  justify-content: center;
  color: #444;
}
.date-value {
  flex: 1;
  display: flex;
  align-items: center;
  padding-left: 24px;
  background: #fafafa;
  border-left: 1px solid #e6e6e6;
  border-right: 1px solid #e6e6e6;
  letter-spacing: -.2px;
  color: #444;
}
.actions {
  margin-left: auto;
  padding-right: 60px;
  display: flex;
  align-items: center;
  gap: 13px;
}
.reoptimize {
  width: 289px;
  height: 54px;
  margin-right: -6px;
  background: #0668ad;
  color: #fff;
  font-size: 20.500px;
  font-weight: 600;
  letter-spacing: .35px;
  display: flex;
  align-items: center;
  gap: 20px;
  padding-left: 20px;
}
.round {
  width: 53px;
  height: 54px;
  border-radius: 50%;
  display: flex;
  align-items: center;
  justify-content: center;
}
.round.blue {
  background: #0668ad;
}
.round.green {
  background: #4caf50;
}
.round.last {
  margin-left: -4px;
}
.content {
  flex: 1;
  min-height: 0;
  display: flex;
  flex-direction: column;
  overflow: hidden;
}
.title-row {
  flex: none;
  height: 53px;
  margin-top: 14px;
  display: flex;
  align-items: center;
  padding-left: 263px;
  padding-right: 41px;
}
.route-title {
  font-size: 30.800px;
  color: #3a3a3a;
  margin-right: 10px;
  white-space: nowrap;
}
.agent-dot {
  display: inline-block;
  width: 15px;
  height: 15px;
  flex: none;
  border-radius: 50%;
  background: #de66d2;
  border: 2px solid #222;
}
.agent-dot.big {
  width: 30px;
  height: 30px;
}
.next {
  margin-left: 11px;
  flex: none;
}
.close {
  margin-left: auto;
  width: 88px;
  height: 53px;
  background: #fff;
  border: 1.500px solid #bbb;
  box-shadow: 0 1px 2px rgba(0, 0, 0, .2);
  display: flex;
  align-items: center;
  justify-content: center;
}
.columns {
  flex: 1;
  min-height: 0;
  margin-top: 14px;
  padding-left: 27px;
  display: flex;
}
.left {
  flex: none;
  width: 893px;
  margin-right: 27px;
  padding-top: 1px;
}
.stats {
  box-sizing: border-box;
  height: 87px;
  padding: 0 0 0 33px;
  display: flex;
  align-items: center;
  background: #fff;
  border: 1px solid #e2e2e2;
  border-radius: 6px;
  box-shadow: 0 2px 10px rgba(0, 0, 0, .12);
}
.stat {
  flex: none;
  display: flex;
  align-items: center;
  color: #555;
  font-size: 20px;
  line-height: 30px;
}
.stat-icon {
  color: #555;
  flex: none;
}
.stat-text {
  display: block;
}
.map {
  margin-top: 28px;
  height: 1085px;
  overflow: hidden;
}
.map svg {
  display: block;
}
.map text {
  font-family: Roboto, "Liberation Sans", sans-serif;
}
.gray, .green, .teal, .blue, .md, .sm, .xs, .city, .zone {
  paint-order: stroke;
  stroke: #fff;
  stroke-width: 2.500px;
  stroke-linejoin: round;
}
.gray { fill: #607d8b; font-size: 23px; }
.green { fill: #2f8a52; font-size: 23px; }
.teal { fill: #0f8fa3; font-size: 23px; }
.blue { fill: #1d6bc9; font-size: 23px; }
.md { fill: #4a4f55; font-size: 21px; font-weight: 500; }
.sm { fill: #5f6368; font-size: 17px; }
.xs { fill: #5f6368; font-size: 16px; }
.city { fill: #202124; font-size: 33px; font-weight: 500; }
.zone { fill: #5f6368; font-size: 23px; font-weight: 500; letter-spacing: 2.500px; }
.shield { fill: #333; font-size: 18px; }
.pin-num {
  fill: #fff;
  font-size: 25px;
  font-weight: 500;
}
.google {
  font-size: 32px;
  font-weight: 500;
  fill: #a6abb0;
  stroke: #fff;
  stroke-width: 2px;
  paint-order: stroke;
}
.attr {
  fill: #333;
  font-size: 16.700px;
}
.right {
  flex: none;
  width: 1031px;
}
.display-options {
  margin-left: 4px;
  width: 315px;
  height: 43px;
  border-radius: 22px;
  background: #f0f0f0;
  color: #666;
  font-size: 20px;
  display: flex;
  align-items: center;
  gap: 17px;
  padding-left: 36px;
  letter-spacing: .4px;
}
.start-card {
  box-sizing: border-box;
  margin-top: 14px;
  height: 79px;
  display: flex;
  align-items: center;
  gap: 64px;
  padding-left: 31px;
  background: #eee;
  border: 1px solid #e0e0e0;
  box-shadow: 0 2px 8px rgba(0, 0, 0, .1);
  line-height: 30px;
  letter-spacing: .1px;
}
.start-flag {
  color: #333;
  flex: none;
}
b {
  font-weight: 600;
  color: #222;
}
.stop {
  margin-top: 25px;
  background: #fff;
  border: 1px solid #e2e2e2;
  box-shadow: 0 2px 8px rgba(0, 0, 0, .1);
}
.stop-head {
  height: 95px;
  display: flex;
  align-items: center;
  background: #eee;
}
.stop-head.tall {
  height: 128px;
}
.stop-who {
  box-sizing: border-box;
  align-self: stretch;
  display: flex;
  align-items: center;
  position: relative;
  padding-left: 17px;
}
.stop-who.flagged {
  width: 459px;
  margin: -4px 0 0 -2px;
  height: 99px;
  border: 7px solid #1a7cf0;
  padding-left: 12px;
}
.stop-num {
  width: 33px;
  height: 33px;
  flex: none;
  margin-right: 21px;
  border-radius: 50%;
  background: #0668ad;
  color: #fff;
  font-size: 17px;
  font-weight: 600;
  display: flex;
  align-items: center;
  justify-content: center;
}
.stop-num.wide {
  width: 37px;
  margin-right: 20px;
}
.stop-text h3 {
  font-size: 27px;
  font-weight: 600;
  color: #222;
  line-height: 36px;
}
.remote {
  margin-top: 1px;
  font-size: 22.500px;
  font-weight: 600;
  letter-spacing: .2px;
  color: #222;
}
.address {
  width: 400px;
  font-size: 21.800px;
  line-height: 33px;
}
.alert {
  position: absolute;
  top: -19px;
  right: -18px;
  width: 34px;
  height: 34px;
  border-radius: 50%;
  background: #1a7cf0;
  color: #fff;
  font-size: 26px;
  font-weight: 800;
  text-align: center;
  line-height: 34px;
}
.stop-time {
  margin-left: auto;
  width: 73px;
  height: 35px;
  background: #0668ad;
  color: #fff;
  font-size: 18px;
  font-weight: 600;
  display: flex;
  align-items: center;
  justify-content: center;
  border-radius: 1px;
}
.stop-time.narrow {
  width: 69px;
}
.stop-more {
  width: 65px;
  padding-left: 11px;
  box-sizing: border-box;
  margin-top: -8px;
  font-size: 26px;
  font-weight: 700;
  letter-spacing: -1px;
  color: #222;
}
.stop-section {
  padding: 22px 26px 21px 29px;
  display: flex;
  line-height: 30px;
}
.stop-section.first {
  padding-top: 14px;
  padding-bottom: 33px;
}
.col {
  flex: none;
  width: 511px;
}
.col h4 {
  font-size: 27.500px;
  font-weight: 600;
  letter-spacing: .1px;
  color: #222;
  line-height: 36px;
  margin-bottom: 10px;
  white-space: nowrap;
}
.col.files {
  flex: 1;
  width: auto;
  padding-top: 46px;
}
.add {
  display: block;
  margin: 2px 0 -8px 28px;
  color: #222;
}
.tel {
  color: #1a7db8;
  text-decoration: underline;
  letter-spacing: -.55px;
}
.slot {
  letter-spacing: -.4px;
}
.agent {
  display: flex;
  align-items: center;
  gap: 8px;
}
.stop hr {
  margin: 0 25px 0 26px;
  border: none;
  border-top: 2px solid #e6e6e6;
}
.scroll-track {
  flex: none;
  margin-left: 14px;
  width: 26px;
  border-left: 1.500px solid #eee;
  box-sizing: border-box;
  padding: 0 5px 0 6px;
}
.scroll-thumb {
  display: block;
  height: 251px;
  margin-top: 6px;
  border-radius: 8px;
  background: #c4c4c4;
}
</style>

<style>
html, body {
  margin: 0;
  background: #fff;
}
</style>
